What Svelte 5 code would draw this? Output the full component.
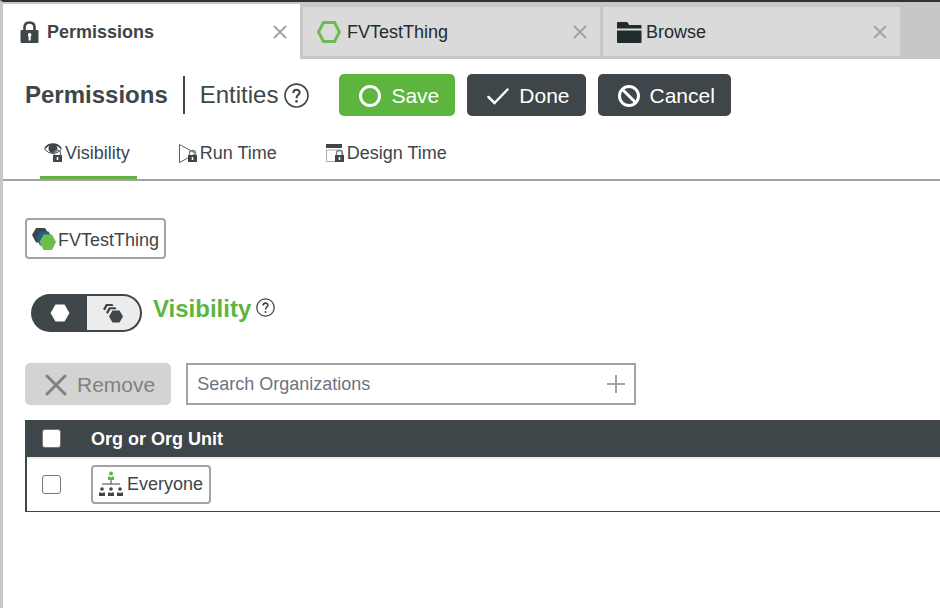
<script>
    let tabs = [
        { name: 'Permissions', icon: 'lock' },
        { name: 'FVTestThing', icon: 'hexagon' },
        { name: 'Browse', icon: 'folder' }
    ];
    let sections = [
        { name: 'Visibility', icon: 'eye' },
        { name: 'Run Time', icon: 'run' },
        { name: 'Design Time', icon: 'design' }
    ];
    let activeTab = $state('Permissions');
    let activeSection = $state('Visibility');
    let mode = $state('single');
    let search = $state('');
    let allChecked = $state(false);
    let rows = $state([{ name: 'Everyone', checked: false }]);
    let anySelected = $derived(rows.some((row) => row.checked));

    function toggleAll() {
        rows.forEach((row) => (row.checked = allChecked));
    }
</script>

{#snippet smallLock()}
    <path d="M11.500 13V10Q11.500 7.500 14.500 7.500T17.500 10V13" fill="none" stroke="#7b8082" stroke-width="1.300" />
    <path d="M10 12h9v7h-9z" fill="#3e4649" />
    <path d="M13.700 14h1.600v3h-1.600z" fill="#fff" />
{/snippet}

{#snippet help(size)}
    <svg width={size} height={size} viewBox="0 0 24 24" fill="none" stroke="#3e4649" aria-hidden="true">
        <circle cx="12" cy="12" r="11" stroke-width="1.600" />
        <path d="M9 9.500C9 5.300 15.200 5.600 15 9.200C14.900 11.400 12 11.500 12 14.600" stroke-width="2" />
        <circle cx="12" cy="17.600" r="1.300" fill="#3e4649" stroke="none" />
    </svg>
{/snippet}

<div class="app">
    <div class="tabs">
        {#each tabs as tab}
            <div class="tab {activeTab === tab.name ? 'active' : ''}">
                <button class="tab-name" onclick={() => (activeTab = tab.name)}>
                    {#if tab.icon === 'lock'}
                        <svg width="19" height="22" viewBox="0 0 19 22">
                            <path d="M4.500 10V6.500Q4.500 1.500 9.500 1.500T14.500 6.500V10" fill="none" stroke="#3e4649" stroke-width="2.600" />
                            <rect x=".5" y="9" width="18" height="13" rx="1" fill="#3e4649" />
                            <path d="M9.500 12a1.900 1.900 0 0 1 1.200 3.400V19.500H8.600V15.400H8V13.300Q8.300 12 9.500 12z" fill="#fff" />
                        </svg>
                    {:else if tab.icon === 'hexagon'}
                        <svg width="24" height="22" viewBox="0 0 24 22">
                            <path d="M6.500 1.500h11L22.500 11l-5 9.500h-11L1.500 11z" fill="none" stroke="#6cbb4f" stroke-width="3" />
                        </svg>
                    {:else}
                        <svg width="25" height="22" viewBox="0 0 25 22" fill="#212b2e">
                            <path d="M0 7.500V2Q0 1 1 1h8.500q1 0 1.500 1l1 2H23.500q1 0 1 1v2.500z" />
                            <path d="M0 9.500h24.500V21q0 1-1 1H1q-1 0-1-1z" />
                        </svg>
                    {/if}
                    <span>{tab.name}</span>
                </button>
                <button class="close" aria-label="Close {tab.name}">
                    <svg width="14" height="14" viewBox="0 0 14 14">
                        <path d="M1 1l12 12M13 1L1 13" stroke="#a3a3a3" stroke-width="2" />
                    </svg>
                </button>
            </div>
        {/each}
    </div>

    <header class="header">
        <h1 class="title">Permissions</h1>
        <div class="subtitle">
            <span>Entities</span>
            <button class="plain" aria-label="Entities help">{@render help(25)}</button>
        </div>
        <div class="actions">
            <button class="btn save">
                <svg width="22" height="22" viewBox="0 0 22 22" fill="none" stroke="#fff" stroke-width="3">
                    <circle cx="11" cy="11" r="9.500" />
                </svg>
                Save
            </button>
            <button class="btn done">
                <svg width="22" height="22" viewBox="0 0 22 22" fill="none" stroke="#fff" stroke-width="2.500" stroke-linecap="round">
                    <path d="M1.500 12l6 6L20.500 4.500" />
                </svg>
                Done
            </button>
            <button class="btn cancel">
                <svg width="22" height="22" viewBox="0 0 22 22" fill="none" stroke="#fff" stroke-width="3">
                    <circle cx="11" cy="11" r="9.500" />
                    <path d="M4.500 4.500l13 13" />
                </svg>
                Cancel
            </button>
        </div>
    </header>

    <nav class="sections">
        {#each sections as section}
            <button class="section {activeSection === section.name ? 'active' : ''}" onclick={() => (activeSection = section.name)}>
                <svg width="20" height="20" viewBox="0 0 20 20">
                    {#if section.icon === 'eye'}
                        <path d="M1.500 6Q5 1.500 10 1.500T18.500 6Q15 10.500 10 10.500T1.500 6z" fill="#fff" stroke="#3e4649" />
                        <circle cx="10" cy="5.500" r="4.500" fill="#3e4649" />
                        <path d="M2 5Q5 1 10 1T18 5" fill="none" stroke="#3e4649" stroke-width="1.500" />
                    {:else if section.icon === 'run'}
                        <path d="M1.500 1.500v18L18 10.500z" fill="#fff" stroke="#5b6265" />
                    {:else}
                        <path d="M1.500 7v11.500h15V7z" fill="#fff" stroke="#a9abac" />
                        <path d="M1 1h16v4H1z" fill="#3e4649" />
                    {/if}
                    {@render smallLock()}
                </svg>
                {section.name}
            </button>
        {/each}
    </nav>

    <main class="content">
        <a class="chip entity" href="#FVTestThing">
            <svg width="24" height="22" viewBox="0 0 24 22">
                <path d="M4 0h9l4 6.500-4 8H4L0 7z" fill="#3e4649" />
                <path d="M8 3.500h8.500l4 7-4 7H8l-3.500-7z" fill="#245d91" />
                <path d="M11.500 6.500h8.500L24 14l-4 8h-8.500L7.500 14z" fill="#6cc04a" />
            </svg>
            <span>FVTestThing</span>
        </a>

        <div class="heading">
            <div class="toggle">
                <button class={mode === 'single' ? 'on' : ''} aria-label="Single entity" onclick={() => (mode = 'single')}>
                    <svg width="20" height="18" viewBox="0 0 20 18">
                        <path d="M5.500.5h9L19.500 9l-5 8.500h-9L.5 9z" fill="currentColor" />
                    </svg>
                </button>
                <button class={mode === 'multiple' ? 'on' : ''} aria-label="Multiple entities" onclick={() => (mode = 'multiple')}>
                    <svg width="20" height="20" viewBox="0 0 20 20">
                        <path d="M0 6L3 1h6.500l1 2H4.500L2 7.500z" fill="currentColor" />
                        <path d="M3 9.500L6 4.200h6.500l1 2H7.500L4.800 11z" fill="currentColor" />
                        <path d="M9.500 7.500h7L20 13.500l-3.500 6h-7L6 13.500z" fill="currentColor" />
                    </svg>
                </button>
            </div>
            <h2>Visibility</h2>
            <button class="plain" aria-label="Visibility help">{@render help(19)}</button>
        </div>

        <div class="toolbar">
            <button class="btn remove" disabled={!anySelected}>
                <svg width="22" height="22" viewBox="0 0 22 22" fill="none" stroke="currentColor" stroke-width="3" stroke-linecap="round">
                    <path d="M2 2l18 18M20 2L2 20" />
                </svg>
                Remove
            </button>
            <div class="search">
                <input type="text" placeholder="Search Organizations" aria-label="Search Organizations" bind:value={search} />
                <button class="plain" aria-label="Add organization">
                    <svg width="20" height="20" viewBox="0 0 20 20">
                        <path d="M10 1v18M1 10h18" stroke="#a3a3a3" stroke-width="2" />
                    </svg>
                </button>
            </div>
        </div>

        <table>
            <thead>
                <tr>
                    <th class="check"><input type="checkbox" aria-label="Select all" bind:checked={allChecked} onchange={toggleAll} /></th>
                    <th>Org or Org Unit</th>
                </tr>
            </thead>
            <tbody>
                {#each rows as row}
                    <tr>
                        <td class="check"><input type="checkbox" aria-label="Select {row.name}" bind:checked={row.checked} /></td>
                        <td>
                            <a class="chip org" href="#{row.name}">
                                <svg width="24" height="26" viewBox="0 0 24 26" fill="#3e4649">
                                    <g fill="#5db53d">
                                        <circle cx="12" cy="2.500" r="2" />
                                        <path d="M9 9V5.500h1.500l1.500 1 1.500-1H15V9z" />
                                    </g>
                                    <path d="M11.500 9h1v3.500H21v1H3v-1h8.500z" />
                                    {#each [3, 12, 21] as x}
                                        <circle cx={x} cy="18" r="1.800" />
                                        <path d="M{x - 3} 25v-3.500h2l1 .8 1-.8h2V25z" />
                                    {/each}
                                </svg>
                                {row.name}
                            </a>
                        </td>
                    </tr>
                {/each}
            </tbody>
        </table>
    </main>
</div>

<style>
    :global(body) {
        background: #fff;
    }

    .app, .app * {
        box-sizing: border-box;
    }

    .app {
        min-height: 100vh;
        border-top: 2px solid #333231;
        border-left: 3px solid #c7c7c7;
        font-family: "Liberation Sans", Arial, sans-serif;
        font-size: 18px;
        line-height: 22px;
        color: #3e4649;
    }

    button {
        font: inherit;
        color: inherit;
        border: none;
        background: none;
        padding: 0;
        cursor: pointer;
    }

    svg {
        display: block;
        flex: none;
    }

    h1, h2 {
        margin: 0;
        font-size: 24px;
        line-height: 28px;
    }

    .tabs {
        display: flex;
        align-items: center;
        gap: 3px;
        height: 57px;
        padding-top: 2px;
        background: #c7c7c7;
    }

    .tab {
        display: flex;
        align-items: center;
        justify-content: space-between;
        flex: 0 1 297px;
        height: 49px;
        padding: 0 13px 0 14px;
        background: #dadada;
        color: #212b2e;
    }

    .tab.active {
        height: 55px;
        padding-left: 17px;
        background: #fff;
        color: #3e4649;
        font-weight: bold;
    }

    .tab-name {
        display: flex;
        align-items: center;
        gap: 6px;
    }

    .tab.active .tab-name {
        gap: 8px;
    }

    .tab:last-child .tab-name {
        gap: 4px;
    }

    .header {
        display: flex;
        align-items: center;
        padding: 15px 22px 0;
    }

    .title {
        padding-right: 15px;
    }

    .subtitle {
        display: flex;
        align-items: center;
        gap: 6px;
        height: 38px;
        padding-left: 15px;
        border-left: 2px solid #3e4649;
        font-size: 24px;
    }

    .actions {
        display: flex;
        gap: 12px;
        margin-left: 30px;
    }

    .btn {
        display: flex;
        align-items: center;
        gap: 10px;
        height: 42px;
        padding: 1px 16px 0 20px;
        border-radius: 5px;
        background: #3e4649;
        color: #fff;
        font-size: 21px;
    }

    .save {
        background: #5db53d;
    }

    .remove:disabled {
        background: #d3d3d3;
        color: #808080;
        cursor: default;
    }

    .sections {
        display: flex;
        gap: 38px;
        height: 65px;
        padding: 18px 37px 0;
        border-bottom: 2px solid #a3a3a3;
    }

    .section {
        display: flex;
        align-items: center;
        gap: 2px;
        padding: 0 7px 4px 3px;
        border-bottom: 3px solid transparent;
    }

    .section.active {
        border-bottom-color: #63b246;
    }

    .content {
        padding: 37px 0 0 22px;
    }

    .chip {
        display: inline-flex;
        align-items: center;
        border: 2px solid #a3a3a3;
        border-radius: 4px;
        background: #fff;
        color: #3e4649;
        text-decoration: none;
    }

    .entity {
        display: flex;
        gap: 2px;
        width: fit-content;
        height: 41px;
        padding: 0 5px;
    }

    .entity span {
        padding-top: 3px;
    }

    .org {
        gap: 4px;
        height: 39px;
        padding: 0 6px;
        vertical-align: middle;
    }

    .heading {
        display: flex;
        gap: 5px;
        margin: 35px 6px 31px;
    }

    .heading h2 {
        margin: 1px 0 0 6px;
        color: #5db53d;
    }

    .heading .plain {
        height: 26px;
    }

    .toggle {
        display: flex;
        width: 111px;
        height: 38px;
        padding: 2px;
        border-radius: 19px;
        background: #3e4649;
    }

    .toggle button {
        display: flex;
        align-items: center;
        justify-content: center;
        flex: 1;
        background: #ececec;
    }

    .toggle button:first-child {
        border-radius: 17px 0 0 17px;
    }

    .toggle button:last-child {
        border-radius: 0 17px 17px 0;
    }

    .toggle .on {
        background: #3e4649;
        color: #fff;
    }

    .toolbar {
        display: flex;
        gap: 15px;
        margin-bottom: 15px;
    }

    .search {
        display: flex;
        align-items: center;
        flex: 0 1 450px;
        height: 42px;
        padding: 0 8px 0 9px;
        border: 2px solid #a3a3a3;
    }

    .search input {
        flex: 1;
        min-width: 0;
        height: 100%;
        padding: 0;
        border: none;
        outline: none;
        font: inherit;
        color: inherit;
    }

    .search input::placeholder {
        color: #6c757d;
        opacity: 1;
    }

    table {
        width: 100%;
        border-collapse: separate;
        border-spacing: 0;
        border-left: 2px solid #3e4649;
        border-bottom: 1px solid #3e4649;
    }

    th {
        height: 39px;
        padding: 0;
        border-bottom: 2px solid #ececec;
        background: #3e4649;
        color: #fff;
        text-align: left;
    }

    td {
        height: 52px;
        padding: 0 0 2px;
    }

    .check {
        width: 64px;
        padding-left: 15px;
    }

    .check input {
        display: block;
        appearance: none;
        width: 19px;
        height: 19px;
        margin: 0;
        border: 1px solid #767676;
        border-radius: 3px;
        background: #fff;
    }

    .check input:checked {
        background: #5db53d;
    }
</style>
